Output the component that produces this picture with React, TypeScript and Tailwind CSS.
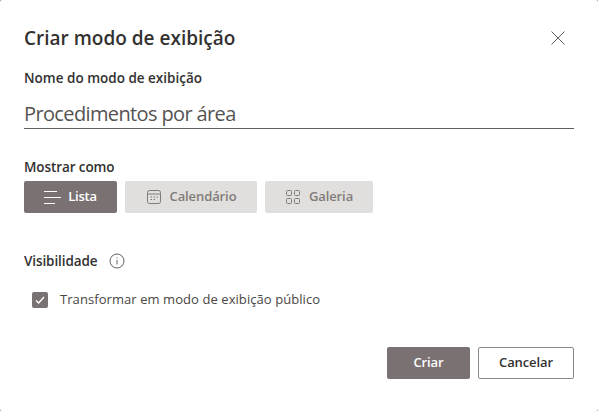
const font = "font-['Open_Sans',sans-serif]"

const App = () => {
    return (
        <div className={`w-[598px] h-[411px] bg-[#8a8a8a] ${font}`}>
            <div className="w-full h-full bg-white rounded-[2px] flex flex-col px-6 overflow-hidden">
                <div className="flex items-center justify-between h-[28px] mt-6">
                    <h1 className="text-[19px] leading-[28px] font-semibold text-[#323130]">Criar modo de exibição</h1>
                    <svg className="w-[14px] h-[14px] mr-[9px] text-[#605e5c]" viewBox="0 0 14 14" fill="none" stroke="currentColor" strokeWidth="1">
                        <path d="M0.5 0.5 13.5 13.5M13.5 0.5 0.5 13.5" />
                    </svg>
                </div>
                <label className="text-[13.5px] leading-[18px] font-semibold text-[#323130] mt-[17px]">Nome do modo de exibição</label>
                <div className="h-[32px] mt-[10px] border-b border-[#605e5c] text-[20px] leading-[34px] text-[#555351] tracking-[-0.63px]">
                    Procedimentos por área
                </div>
                <label className="text-[13.5px] leading-[18px] font-semibold text-[#323130] mt-[29px] tracking-[-0.1px]">Mostrar como</label>
                <div className="flex gap-2 mt-[5px]">
                    <div className="w-[93px] h-[32px] bg-[#7a7272] rounded-[2px] flex items-center justify-center gap-[7px] text-white text-[13px] font-semibold tracking-[-0.2px] pr-[1px]">
                        <svg className="w-[18px] h-[18px]" viewBox="0 0 18 18" fill="none" stroke="currentColor" strokeWidth="1">
                            <path d="M1 3.5H14M1 9.5H18M1 15.5H12" />
                        </svg>
                        Lista
                    </div>
                    <div className="w-[132px] h-[32px] bg-[#e1dfdd] rounded-[2px] flex items-center justify-center gap-2 text-[#7f7b79] text-[13px] font-semibold tracking-[-0.1px]">
                        <svg className="w-[16px] h-[16px]" viewBox="0 0 16 16" fill="none" stroke="currentColor" strokeWidth="1">
                            <rect x="1.5" y="1.5" width="13" height="13" rx="2" />
                            <path d="M1.5 5H14.5" />
                            <path d="M4.5 8H6M7.5 8H9M10.5 8H12M4.5 10.5H6M7.5 10.5H9" />
                        </svg>
                        Calendário
                    </div>
                    <div className="w-[108px] h-[32px] bg-[#e1dfdd] rounded-[2px] flex items-center justify-center gap-2 text-[#7f7b79] text-[13px] font-semibold tracking-[-0.1px]">
                        <svg className="w-[16px] h-[16px]" viewBox="0 0 16 16" fill="none" stroke="currentColor" strokeWidth="1">
                            <rect x="1.5" y="1.5" width="5" height="5" rx="1" />
                            <rect x="9.5" y="1.5" width="5" height="5" rx="1" />
                            <rect x="1.5" y="9.5" width="5" height="5" rx="1" />
                            <rect x="9.5" y="9.5" width="5" height="5" rx="1" />
                        </svg>
                        Galeria
                    </div>
                </div>
                <div className="flex items-center gap-[12px] mt-[39px] h-[18px]">
                    <span className="text-[13.5px] leading-[18px] font-semibold text-[#323130] tracking-[-0.1px]">Visibilidade</span>
                    <svg className="w-[16px] h-[16px] text-[#605e5c]" viewBox="0 0 16 16" fill="none" stroke="currentColor" strokeWidth="1">
                        <circle cx="8" cy="8" r="7" />
                        <path d="M8 7V11.5M8 4.5V5.5" />
                    </svg>
                </div>
                <div className="flex items-center gap-3 ml-2 mt-[22px] h-[16px]">
                    <div className="w-[16px] h-[16px] bg-[#7a7272] rounded-[2px] flex items-center justify-center">
                        <svg className="w-[10px] h-[10px] text-white" viewBox="0 0 10 10" fill="none" stroke="currentColor" strokeWidth="1.3">
                            <path d="M1 5.5 3.7 8 9 2" />
                        </svg>
                    </div>
                    <span className="text-[13px] text-[#484644] tracking-[0.07px]">Transformar em modo de exibição público</span>
                </div>
                <div className="flex justify-end gap-2 mt-[39px]">
                    <button className="w-[83px] h-[32px] bg-[#7a7272] rounded-[2px] text-white text-[13px] font-semibold tracking-[-0.1px]">Criar</button>
                    <button className="w-[96px] h-[32px] bg-white border border-[#8a8886] rounded-[2px] text-[#323130] text-[13px] font-semibold tracking-[-0.1px]">Cancelar</button>
                </div>
            </div>
        </div>
    )
}

export default App;
